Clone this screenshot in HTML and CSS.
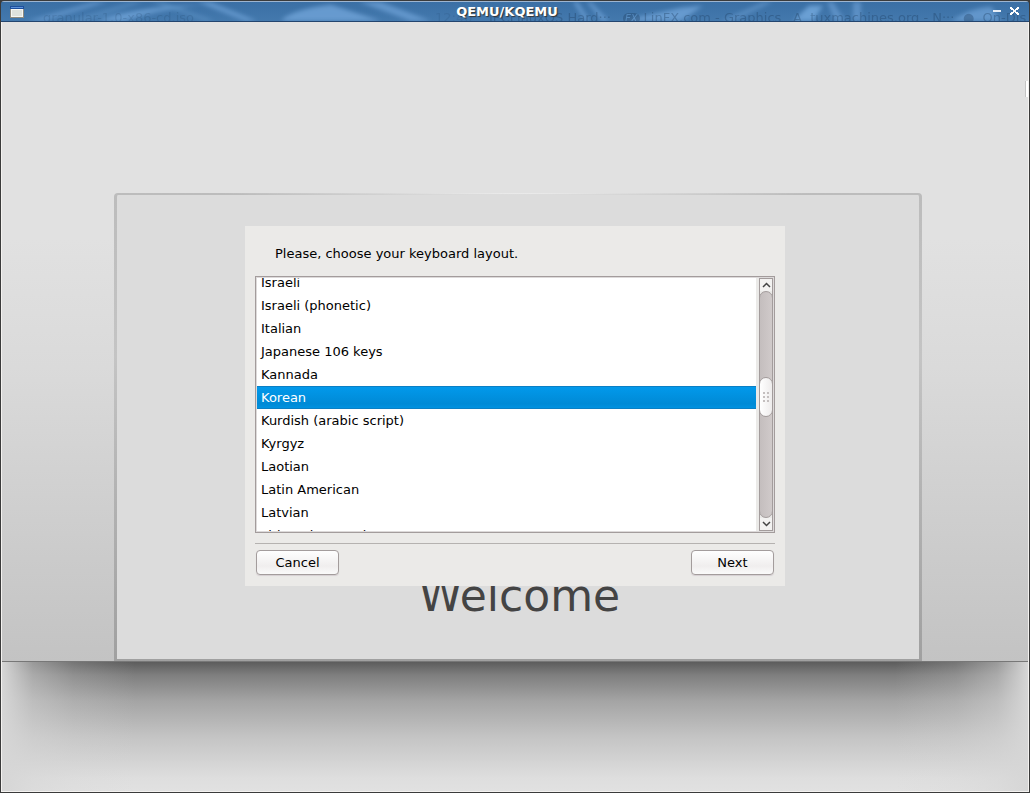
FILE: index.html
```
<!DOCTYPE html>
<html lang="en">
<head>
    <meta charset="UTF-8">
    <title>QEMU/KQEMU</title>
    <link rel="stylesheet" href="styles.css">
</head>
<body>
    <div class="window">
        <header class="titlebar">
            <svg class="streaks" viewBox="0 0 1028 20" preserveAspectRatio="none" aria-hidden="true">
                <defs>
                    <filter id="soft"><feGaussianBlur stdDeviation="2"/></filter>
                </defs>
                <g fill="#6fa4d8" filter="url(#soft)">
                    <path d="M26 20L92 0h14L44 20z" opacity=".6"/>
                    <path d="M66 20L130 0h12L86 20z" opacity=".35"/>
                    <path d="M96 20Q130 6 200 3Q150 10 124 20z" opacity=".8"/>
                    <path d="M150 0h12l52 20h-10z" opacity=".4"/>
                    <path d="M196 0h14l46 20h-12z" opacity=".7"/>
                    <path d="M280 20Q290 8 330 3L380 20z" opacity=".8"/>
                    <path d="M358 0h22l50 20h-20z" opacity=".7"/>
                    <path d="M572 0h5l12 20h-5zM586 0h4l18 20h-7z" opacity=".7"/>
                    <path d="M620 20L680 6 702 4 680 20z" opacity=".8"/>
                    <path d="M720 20L762 0h10L732 20z" opacity=".5"/>
                    <path d="M792 20L808 4h14L812 20z" opacity=".9"/>
                    <path d="M826 0h6l12 20h-10zM852 0h8v20h-8z" opacity=".6"/>
                    <path d="M950 20Q970 6 990 5L1000 20z" opacity=".7"/>
                </g>
            </svg>
            <div class="ghost" aria-hidden="true">
                <span class="ghost-file">granular-1.0-x86-cd.iso</span>
                <span class="ghost-time">12:40</span>
                <span class="ghost-tab">IPCLinuxOS Hard···</span>
                <span class="ghost-tab wide"><i class="ghost-dot">FX</i>LinFX.com - Graphics</span>
                <span class="ghost-tab wide">A&nbsp; tuxmachines.org - N···</span>
                <span class="ghost-tab">●&nbsp; On-Dis</span>
            </div>
            <svg class="app-icon" viewBox="0 0 14 12" width="14" height="12" shape-rendering="crispEdges" aria-hidden="true">
                <path fill="#8f8b80" d="M0 0h14v12H0z"/>
                <path fill="#f7f7f3" d="M1 1h12v10H1z"/>
                <path fill="#dfe2dd" d="M2 4h10v6H2z"/>
                <path fill="#1d4f9c" d="M0 0h14v3H0z"/>
                <path fill="#5d93dc" d="M1 1h12v1H1z"/>
            </svg>
            <h1 class="title">QEMU/KQEMU</h1>
            <div class="window-buttons">
                <button class="window-button" aria-label="Minimize">
                    <svg viewBox="0 0 9 9" width="9" height="9" shape-rendering="crispEdges"><path fill="#e6edf6" d="M0 3h8v2H0z"/></svg>
                </button>
                <button class="window-button" aria-label="Close">
                    <svg viewBox="0 0 9 8" width="9" height="8" shape-rendering="crispEdges"><path fill="#fff" d="M0 0h2v1h1v1h1v1h1V2h1V1h1V0h2v2H8v1H6v2h2v1h1v2H7V7H6V6H5V5H4v1H3v1H2v1H0V6h1V5h2V3H1V2H0z"/></svg>
                </button>
            </div>
        </header>

        <main class="screen">
            <div class="wall">
                <section class="panel">
                    <form class="dialog">
                        <label class="prompt" id="prompt">Please, choose your keyboard layout.</label>
                        <div class="list-box">
                            <ul class="layouts" id="layouts" role="listbox" tabindex="0" aria-labelledby="prompt">
                                <li role="option">Israeli</li>
                                <li role="option">Israeli (phonetic)</li>
                                <li role="option">Italian</li>
                                <li role="option">Japanese 106 keys</li>
                                <li role="option">Kannada</li>
                                <li role="option" aria-selected="true" class="selected">Korean</li>
                                <li role="option">Kurdish (arabic script)</li>
                                <li role="option">Kyrgyz</li>
                                <li role="option">Laotian</li>
                                <li role="option">Latin American</li>
                                <li role="option">Latvian</li>
                                <li role="option">Lithuanian number row</li>
                            </ul>
                            <div class="scrollbar">
                                <button type="button" class="arrow" aria-label="Scroll up">
                                    <svg viewBox="0 0 9 6" width="9" height="6"><path d="M1 5l3.500-3.500L8 5" fill="none" stroke="#444" stroke-width="1.500"/></svg>
                                </button>
                                <div class="track">
                                    <div class="thumb">
                                        <svg viewBox="0 0 6 11" width="6" height="11" fill="#c4bfbf"><path d="M0 0h2v2H0zM4 0h2v2H4zM0 4h2v2H0zM4 4h2v2H4zM0 8h2v2H0zM4 8h2v2H4z"/></svg>
                                    </div>
                                </div>
                                <button type="button" class="arrow" aria-label="Scroll down">
                                    <svg viewBox="0 0 9 6" width="9" height="6"><path d="M1 1l3.500 3.500L8 1" fill="none" stroke="#444" stroke-width="1.500"/></svg>
                                </button>
                            </div>
                        </div>
                        <div class="actions">
                            <button type="button" class="action">Cancel</button>
                            <button type="button" class="action">Next</button>
                        </div>
                    </form>
                    <p class="welcome">Welcome</p>
                </section>
            </div>
            <div class="floor"></div>
        </main>
    </div>

    <script>
        // start slightly scrolled, with the selected row in the middle
        document.getElementById('layouts').scrollTop = 7;
    </script>
</body>
</html>
```
FILE: styles.css
```
* {
    box-sizing: border-box;
}

body {
    margin: 0;
    background: #3b3b3b;
    color: #000;
    font-family: 'DejaVu Sans', sans-serif;
    font-size: 13px;
}

button {
    margin: 0;
    padding: 0;
    font: inherit;
    color: inherit;
}

.window {
    display: flex;
    flex-direction: column;
    min-height: 100vh;
    border: 1px solid #3b3b3b;
    border-radius: 4px 4px 0 0;
    overflow: hidden;
}

/* title bar */
.titlebar {
    position: relative;
    display: flex;
    align-items: center;
    justify-content: space-between;
    height: 21px;
    padding: 0 10px 0 9px;
    border-top: 1px solid #9db5d0;
    border-bottom: 1px solid #23456f;
    background: linear-gradient(#3a6fa5, #4479ad);
    overflow: hidden;
}

.streaks {
    position: absolute;
    top: 0;
    left: 0;
    width: 100%;
    height: 100%;
}

.ghost {
    position: absolute;
    top: 7px;
    left: 42px;
    right: 0;
    display: flex;
    color: #1d3c5e;
    font-size: 13px;
    line-height: 18px;
    white-space: nowrap;
    opacity: 0.35;
}

.ghost span {
    flex-shrink: 0;
}

.ghost-file {
    width: 392px;
    opacity: 0.5;
}

.ghost-time {
    width: 54px;
    opacity: 0.4;
}

.ghost-tab {
    width: 134px;
}

.ghost-tab.wide {
    width: 170px;
}

.ghost-dot {
    margin-right: 4px;
    padding: 0 2px;
    border-radius: 6px;
    background: #1d3c5e;
    color: #6fa4d8;
    font-size: 10px;
}

.app-icon,
.window-buttons {
    position: relative;
}

.title {
    position: absolute;
    left: 0;
    right: 0;
    margin: 0 16px 0 0;
    color: #fff;
    font-size: 13px;
    line-height: 18px;
    text-align: center;
    text-shadow: 1px 1px 1px #333;
}

.window-buttons {
    display: flex;
    gap: 8px;
}

.window-button {
    display: flex;
    border: 0;
    background: none;
}

/* guest screen */
.screen {
    position: relative;
    flex: 1;
    display: flex;
    flex-direction: column;
    border: 1px solid #f4f2f0;
    border-top: 0;
}

/* sliver of a tab peeking in at the right edge */
.screen::after {
    content: '';
    position: absolute;
    top: 59px;
    right: 0;
    width: 2px;
    height: 16px;
    border-left: 1px solid #c4c4c4;
    background: #fff;
}

.wall {
    flex: 1;
    display: flex;
    justify-content: center;
    padding: 171px 105px 0 110px;
    background: linear-gradient(#e1e1e1 0, #e1e1e1 34%, #dadada 54%, #c3c3c3 100%);
}

.panel {
    display: flex;
    flex-direction: column;
    align-items: center;
    width: 100%;
    max-width: 808px;
    padding-top: 31px;
    border: 3px solid transparent;
    border-width: 2px 3px;
    border-radius: 4px 4px 0 0;
    background:
        linear-gradient(#dcdcdc, #dcdcdc) padding-box,
        radial-gradient(300px 4px at 50% 0, #f0f0f0, rgba(240, 240, 240, 0)) border-box,
        linear-gradient(#bcbcbc, #c4c4c4 35%, #b5b5b5 60%, #a0a0a0) border-box;
}

.floor {
    height: 130px;
    border-top: 1px solid #777;
    background:
        linear-gradient(90deg, #d6d6d6, rgba(214, 214, 214, 0.5) 3%, rgba(214, 214, 214, 0.2) 7%, rgba(214, 214, 214, 0) 13%, rgba(214, 214, 214, 0) 87%, rgba(214, 214, 214, 0.2) 93%, rgba(214, 214, 214, 0.5) 97%, #d6d6d6),
        linear-gradient(#5c5c5c, #7e7e7e 10%, #a4a4a4 30%, #c4c4c4 58%, #dedede 90%, #e1e1e1);
}

/* dialog */
.dialog {
    display: flex;
    flex-direction: column;
    width: 540px;
    max-width: 100%;
    height: 360px;
    margin-right: 5px;
    padding: 10px;
    background: #ebeae8;
}

.prompt {
    height: 40px;
    padding-left: 20px;
    line-height: 36px;
}

.list-box {
    display: flex;
    height: 257px;
    border: 1px solid #a39c9c;
    box-shadow: inset 0 0 0 1px #dddada;
    padding: 1px;
    background: #ebeae8;
}

.layouts {
    flex: 1;
    height: 253px;
    margin: 0 3px 0 0;
    padding: 0;
    background: #fff;
    list-style: none;
    overflow: hidden;
    outline: 0;
}

.layouts li {
    height: 23px;
    padding-left: 4px;
    line-height: 23px;
}

.layouts .selected {
    border-top: 1px solid #0b7fc4;
    border-bottom: 1px solid #0b7fc4;
    background: linear-gradient(#0299eb, #008ad6 80%, #0092e0);
    color: #fff;
    line-height: 21px;
}

.scrollbar {
    display: flex;
    flex-direction: column;
    width: 14px;
    border: 1px solid #a39c9c;
}

.arrow {
    display: flex;
    align-items: center;
    justify-content: center;
    height: 12px;
    border: 0;
    background: #f3f2f1;
}

.track {
    flex: 1;
    margin: 0 -1px;
    padding-top: 85px;
    border: 1px solid #a39c9c;
    border-radius: 7px;
    background: linear-gradient(90deg, #c4bebe, #d0caca);
}

.thumb {
    display: flex;
    align-items: center;
    justify-content: center;
    height: 40px;
    margin: 0 -1px;
    border: 1px solid #a39c9c;
    border-radius: 7px;
    background: linear-gradient(90deg, #fff, #eeecec);
}

.actions {
    display: flex;
    justify-content: space-between;
    margin-top: 10px;
    padding: 6px 1px 0;
    border-top: 1px solid #b5b2b0;
}

.action {
    width: 83px;
    height: 25px;
    border: 1px solid #a39c9c;
    border-radius: 4px;
    background: linear-gradient(#fefefe, #f0eeee 65%, #fafafa);
    box-shadow: 0 1px 1px #d5cfd2;
}

/* the top of the word is hidden behind the dialog */
.welcome {
    height: 73px;
    margin: 0;
    padding-left: 4px;
    color: #444;
    font-size: 44px;
    line-height: 20px;
    clip-path: inset(0 -10px);
}
```
